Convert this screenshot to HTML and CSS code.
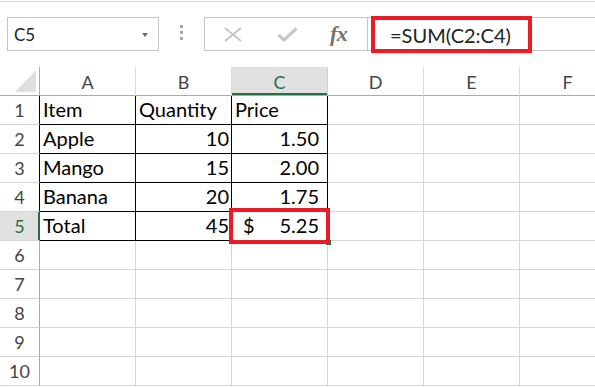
FILE: index.html
```html
<!DOCTYPE html>
<html>
<head>
<meta charset="utf-8">
<link rel="stylesheet" href="styles.css">
</head>
<body>
<div class="topline"></div>
<div class="toolbar">
  <div class="namebox"><span class="ref">C5</span><span class="arrow"></span></div>
  <div class="grip"><span></span><span></span><span></span></div>
  <div class="buttons">
    <svg class="ico-x" width="20" height="15" viewBox="0 0 20 15"><path d="M2 1 L18 14 M18 1 L2 14" stroke="#c3c3c3" stroke-width="1.8" fill="none"/></svg>
    <svg class="ico-check" width="21" height="15" viewBox="0 0 21 15"><path d="M1.5 8 L7 13 L19.5 1.5" stroke="#c8c8c8" stroke-width="3.2" fill="none"/></svg>
    <span class="fx">fx</span>
  </div>
  <div class="formula">
    <div class="redbox"><span class="ftext">=SUM(C2:C4)</span></div>
  </div>
</div>
<div class="sheet">
  <div class="h corner"><span class="tri"></span></div>
  <div class="h">A</div><div class="h">B</div><div class="h hsel">C</div><div class="h">D</div><div class="h">E</div><div class="h">F</div>

  <div class="r rb">1</div>
  <div class="c b">Item</div><div class="c b">Quantity</div><div class="c b">Price</div><div class="c"></div><div class="c"></div><div class="c"></div>

  <div class="r rb">2</div>
  <div class="c b">Apple</div><div class="c b num">10</div><div class="c b num pr">1.50</div><div class="c"></div><div class="c"></div><div class="c"></div>

  <div class="r rb">3</div>
  <div class="c b">Mango</div><div class="c b num">15</div><div class="c b num pr">2.00</div><div class="c"></div><div class="c"></div><div class="c"></div>

  <div class="r rb">4</div>
  <div class="c b">Banana</div><div class="c b num">20</div><div class="c b num pr">1.75</div><div class="c"></div><div class="c"></div><div class="c"></div>

  <div class="r rsel">5</div>
  <div class="c b">Total</div><div class="c b num">45</div><div class="c b sel"><span>$</span><span>5.25</span></div><div class="c"></div><div class="c"></div><div class="c"></div>

  <div class="r">6</div>
  <div class="c"></div><div class="c"></div><div class="c"></div><div class="c"></div><div class="c"></div><div class="c"></div>
  <div class="r">7</div>
  <div class="c"></div><div class="c"></div><div class="c"></div><div class="c"></div><div class="c"></div><div class="c"></div>
  <div class="r">8</div>
  <div class="c"></div><div class="c"></div><div class="c"></div><div class="c"></div><div class="c"></div><div class="c"></div>
  <div class="r">9</div>
  <div class="c"></div><div class="c"></div><div class="c"></div><div class="c"></div><div class="c"></div><div class="c"></div>
  <div class="r">10</div>
  <div class="c"></div><div class="c"></div><div class="c"></div><div class="c"></div><div class="c"></div><div class="c"></div>
</div>
</body>
</html>
```
FILE: styles.css
```css
*, *::before, *::after { box-sizing: border-box; }
html, body { margin: 0; padding: 0; }
body {
  width: 595px;
  height: 387px;
  overflow: hidden;
  background: #fff;
  font-family: Lato, "Open Sans", sans-serif;
  color: #000;
}
.topline {
  margin-top: 1px;
  height: 1px;
  background: #d6d6d6;
}
.toolbar {
  display: flex;
  margin-top: 15px;
  height: 34px;
}
.namebox {
  margin-left: 7px;
  width: 152px;
  height: 34px;
  border: 1px solid #c6c6c6;
  display: flex;
  align-items: center;
  justify-content: space-between;
  padding: 0 10px 0 6px;
}
.ref {
  font-size: 17px;
  color: #222;
  line-height: 20px;
  padding-top: 1px;
}
.arrow {
  width: 0; height: 0;
  border-left: 3px solid transparent;
  border-right: 3px solid transparent;
  border-top: 4px solid #6b6b6b;
  margin-top: 1px;
}
.grip {
  width: 45px;
  display: flex;
  flex-direction: column;
  align-items: center;
  padding-top: 8px;
  gap: 3px;
}
.grip span {
  width: 3px; height: 3px;
  background: #a8a8a8;
}
.buttons {
  width: 164px;
  height: 34px;
  border: 1px solid #c6c6c6;
  display: flex;
  align-items: center;
  padding-left: 18px;
}
.ico-x { margin-top: 1px; }
.ico-check { margin-left: 34px; margin-top: 1px; }
.fx {
  margin-left: 32px;
  font-family: "Liberation Serif", serif;
  font-style: italic;
  font-weight: bold;
  font-size: 22px;
  color: #737373;
  line-height: 22px;
  letter-spacing: -0.5px;
}
.formula {
  flex: 1;
  height: 34px;
  border-top: 1px solid #c6c6c6;
  border-bottom: 1px solid #c6c6c6;
  display: flex;
  align-items: flex-start;
}
.redbox {
  margin: -2px 0 0 3px;
  width: 161px;
  height: 37px;
  border: 4px solid #ed1c24;
  display: flex;
  align-items: center;
  padding-left: 15px;
}
.ftext {
  font-size: 20px;
  color: #222;
  line-height: 24px;
  padding-top: 1px;
}
.sheet {
  margin-top: 16px;
  width: 616px;
  display: grid;
  grid-template-columns: 40px repeat(6, 96px);
  grid-auto-rows: 29px;
}
.h {
  border-right: 1px solid #dadada;
  border-bottom: 1px solid #ababab;
  display: flex;
  align-items: flex-end;
  justify-content: center;
  font-size: 18px;
  line-height: 24px;
  color: #444;
  padding-bottom: 1px;
}
.corner {
  border-right: 1px solid #ababab;
  align-items: flex-end;
  justify-content: flex-end;
  padding: 0 3px 3px 0;
}
.tri {
  width: 21px;
  height: 22px;
  background: #dfdfdf;
  clip-path: polygon(100% 0, 100% 100%, 0 100%);
}
.hsel {
  background: #e1e1e1;
  color: #217346;
  box-shadow: inset 0 -2px 0 #217346;
  border-right-color: #d0d0d0;
}
.r {
  border-right: 1px solid #ababab;
  border-bottom: 1px solid #d4d4d4;
  display: flex;
  align-items: flex-end;
  justify-content: center;
  font-size: 18px;
  line-height: 24px;
  color: #444;
  padding-bottom: 2px;
}
.rb { border-right-color: #000; }
.rsel {
  background: #e1e1e1;
  color: #217346;
  border-right-color: #217346;
  box-shadow: inset -1px 0 0 #217346;
}
.c {
  border-right: 1px solid #d4d4d4;
  border-bottom: 1px solid #d4d4d4;
  display: flex;
  align-items: flex-end;
  font-size: 20px;
  line-height: 24px;
  padding: 0 3px 3px 3px;
}
.b {
  border-right-color: #000;
  border-bottom-color: #000;
}
.num { justify-content: flex-end; padding-right: 2px; }
.pr { padding-right: 8px; }
.sel {
  position: relative;
  justify-content: space-between;
  padding-left: 11px;
  padding-right: 8px;
}
.sel::before {
  content: "";
  position: absolute;
  right: -4px;
  bottom: -5px;
  width: 5px;
  height: 5px;
  background: #217346;
}
.sel::after {
  content: "";
  position: absolute;
  left: -3px;
  top: -4px;
  width: 101px;
  height: 36px;
  border: 4px solid #ed1c24;
}
```
